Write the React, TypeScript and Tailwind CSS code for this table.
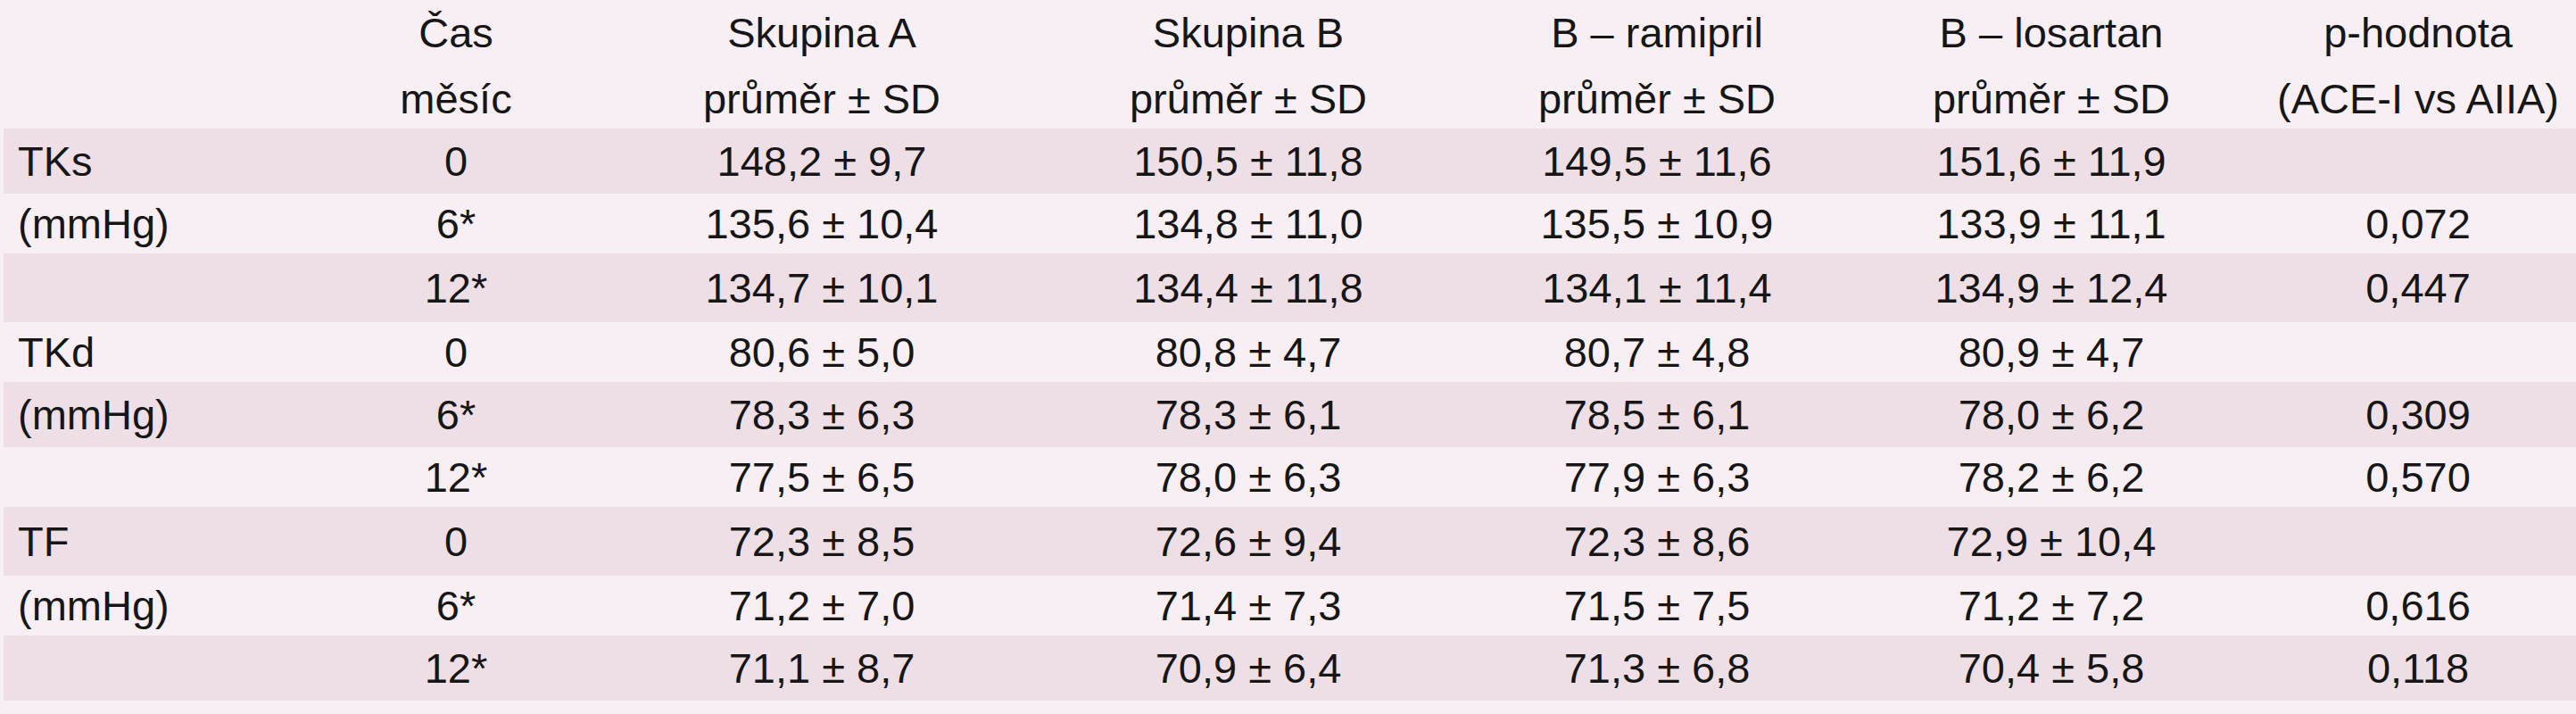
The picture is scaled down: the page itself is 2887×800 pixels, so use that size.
import React from "react";

type Row = { label: string; time: string; vals: string[]; p: string };

const rows: Row[] = [
  { label: "TKs", time: "0", vals: ["148,2 ± 9,7", "150,5 ± 11,8", "149,5 ± 11,6", "151,6 ± 11,9"], p: "" },
  { label: "(mmHg)", time: "6*", vals: ["135,6 ± 10,4", "134,8 ± 11,0", "135,5 ± 10,9", "133,9 ± 11,1"], p: "0,072" },
  { label: "", time: "12*", vals: ["134,7 ± 10,1", "134,4 ± 11,8", "134,1 ± 11,4", "134,9 ± 12,4"], p: "0,447" },
  { label: "TKd", time: "0", vals: ["80,6 ± 5,0", "80,8 ± 4,7", "80,7 ± 4,8", "80,9 ± 4,7"], p: "" },
  { label: "(mmHg)", time: "6*", vals: ["78,3 ± 6,3", "78,3 ± 6,1", "78,5 ± 6,1", "78,0 ± 6,2"], p: "0,309" },
  { label: "", time: "12*", vals: ["77,5 ± 6,5", "78,0 ± 6,3", "77,9 ± 6,3", "78,2 ± 6,2"], p: "0,570" },
  { label: "TF", time: "0", vals: ["72,3 ± 8,5", "72,6 ± 9,4", "72,3 ± 8,6", "72,9 ± 10,4"], p: "" },
  { label: "(mmHg)", time: "6*", vals: ["71,2 ± 7,0", "71,4 ± 7,3", "71,5 ± 7,5", "71,2 ± 7,2"], p: "0,616" },
  { label: "", time: "12*", vals: ["71,1 ± 8,7", "70,9 ± 6,4", "71,3 ± 6,8", "70,4 ± 5,8"], p: "0,118" },
];

const heights = ["h-[73px]", "h-[67px]", "h-[77px]", "h-[67px]", "h-[73px]", "h-[67px]", "h-[77px]", "h-[67px]", "h-[73px]"];

const grid = "grid grid-cols-[325px_364px_456px_500px_416px_468px_354px]";

const headers: [string, string][] = [
  ["Čas", "měsíc"],
  ["Skupina A", "průměr ± SD"],
  ["Skupina B", "průměr ± SD"],
  ["B – ramipril", "průměr ± SD"],
  ["B – losartan", "průměr ± SD"],
  ["p-hodnota", "(ACE-I vs AIIA)"],
];

export default function App() {
  return (
    <div
      className="w-[2887px] h-[800px] overflow-hidden bg-[#f8eff4] text-[#161616] text-[47px] leading-none"
      style={{ fontFamily: '"Liberation Sans", Arial, sans-serif' }}
    >
      <div className="pl-[4px]">
        <div className={`${grid} h-[144px] items-start`}>
          <div />
          {headers.map(([a, b], i) => (
            <div key={i} className="text-center leading-[74px] whitespace-nowrap">
              <div>{a}</div>
              <div>{b}</div>
            </div>
          ))}
        </div>
        {rows.map((r, i) => (
          <div
            key={i}
            className={`${grid} ${heights[i]} items-center ${i % 2 === 0 ? "bg-[#eedfe6]" : ""}`}
          >
            <div className="pl-[16px] whitespace-nowrap">{r.label}</div>
            <div className="text-center whitespace-nowrap">{r.time}</div>
            {r.vals.map((v, j) => (
              <div key={j} className="text-center whitespace-nowrap">
                {v}
              </div>
            ))}
            <div className="text-center whitespace-nowrap">{r.p}</div>
          </div>
        ))}
      </div>
    </div>
  );
}
